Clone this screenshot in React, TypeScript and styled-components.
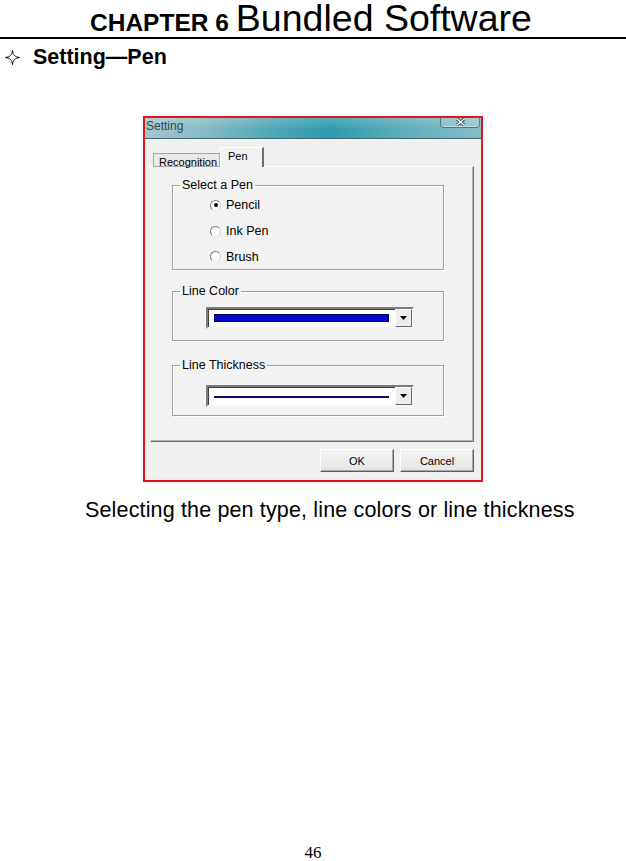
import { createGlobalStyle, styled } from "styled-components";

const GlobalStyle = createGlobalStyle`
  html, body {
    margin: 0;
    padding: 0;
    background: #fff;
  }
  body {
    font-family: "Liberation Sans", Arial, sans-serif;
    color: #000;
  }
  * {
    box-sizing: border-box;
  }
`;

const Page = styled.div`
  width: 626px;
  height: 861px;
  display: flex;
  flex-direction: column;
  overflow: hidden;
  background: #fff;
`;

const Header = styled.header`
  height: 39px;
  padding-left: 90px;
  border-bottom: 2px solid #000;
  line-height: 37px;
  white-space: nowrap;
  & .chapter {
    font-size: 24.5px;
    font-weight: bold;
    line-height: 1;
    margin-right: 7px;
  }
  & .title {
    font-size: 37.5px;
  }
`;

const SectionTitle = styled.h2`
  margin: 7px 0 0 5px;
  height: 22px;
  display: flex;
  align-items: center;
  gap: 13px;
  font-size: 21.5px;
  font-weight: bold;
  line-height: 22px;
`;

const Figure = styled.div`
  margin: 48px 0 0 143px;
`;

const Dialog = styled.div`
  width: 340px;
  height: 366px;
  border: 2px solid #e3151a;
  background: #f0f0f0;
  display: flex;
  flex-direction: column;
  font-family: "Liberation Sans", Arial, sans-serif;
`;

const TitleBar = styled.div`
  height: 21px;
  flex: none;
  display: flex;
  align-items: flex-start;
  padding-left: 1px;
  border-bottom: 1px solid #3f6a74;
  background:
    linear-gradient(to bottom, rgba(255, 255, 255, 0.18), rgba(255, 255, 255, 0) 60%),
    linear-gradient(
      to right,
      #a6c6cc 0%,
      #86bac4 18%,
      #4fa6b7 38%,
      #2c9aae 55%,
      #5aabba 75%,
      #86bcc6 100%
    );
`;

const TitleText = styled.span`
  font-size: 12px;
  line-height: 16px;
  color: #2b4a52;
`;

const CloseButton = styled.div`
  margin-left: auto;
  margin-right: 1px;
  width: 40px;
  height: 10px;
  border: 1px solid rgba(30, 60, 70, 0.55);
  border-top: none;
  border-radius: 0 0 4px 4px;
  box-shadow: inset 0 -1px 0 rgba(255, 255, 255, 0.45);
  background: rgba(255, 255, 255, 0.12);
  display: flex;
  align-items: flex-start;
  justify-content: center;
`;

const Body = styled.div`
  flex: 1;
  padding: 9px 7px 0 5px;
  display: flex;
  flex-direction: column;
`;

const TabRow = styled.div`
  height: 19px;
  padding-left: 3px;
  display: flex;
  align-items: flex-end;
  position: relative;
  z-index: 1;
  margin-bottom: -1px;
`;

const Tab = styled.div<{ $active?: boolean; $width: number }>`
  width: ${(p) => p.$width}px;
  height: ${(p) => (p.$active ? 20 : 14)}px;
  padding: 2px 0 0 ${(p) => (p.$active ? 7 : 5)}px;
  font-size: 11px;
  line-height: 13px;
  color: #000;
  background: ${(p) => (p.$active ? "#f2f2f2" : "#e9e9e9")};
  border: 1px solid #a5a5a5;
  border-bottom: ${(p) => (p.$active ? "none" : "1px solid #a5a5a5")};
  border-right-width: ${(p) => (p.$active ? 2 : 1)}px;
  border-right-color: ${(p) => (p.$active ? "#6e6e6e" : "#a5a5a5")};
  border-left-color: ${(p) => (p.$active ? "#fff" : "#a5a5a5")};
  border-top-color: ${(p) => (p.$active ? "#fff" : "#a5a5a5")};
`;

const Panel = styled.div`
  height: 276px;
  flex: none;
  background: #f2f2f2;
  border: 1px solid;
  border-color: #fff #6e6e6e #6e6e6e #fff;
  box-shadow: inset -1px -1px 0 #b4b4b4;
  padding: 11px 0 0 21px;
  display: flex;
  flex-direction: column;
`;

const Group = styled.fieldset<{ $gap: number }>`
  margin: ${(p) => p.$gap}px 0 0 0;
  padding: 0;
  width: 272px;
  min-width: 0;
  border: 1px solid #a0a0a0;
  box-shadow: inset 1px 1px 0 #fff, 1px 1px 0 #fff;
`;

const Legend = styled.legend`
  margin-left: 7px;
  padding: 0 2px;
  font-size: 12.5px;
  line-height: 14px;
  color: #000;
`;

const RadioList = styled.div`
  margin-top: 0;
  padding-left: 37px;
  display: flex;
  flex-direction: column;
`;

const RadioRow = styled.label`
  height: 26px;
  display: flex;
  align-items: center;
  gap: 5px;
  font-size: 12.5px;
  color: #000;
  &:last-child {
    height: 25px;
  }
`;

const RadioDot = styled.span<{ $checked?: boolean }>`
  width: 11px;
  height: 11px;
  border-radius: 50%;
  background: #fff;
  border: 1px solid;
  border-color: #7a7a7a #d0d0d0 #e4e4e4 #7a7a7a;
  display: flex;
  align-items: center;
  justify-content: center;
  &::after {
    content: "";
    width: 4px;
    height: 4px;
    border-radius: 50%;
    background: ${(p) => (p.$checked ? "#000" : "transparent")};
  }
`;

const Combo = styled.div<{ $top: number; $bottom: number }>`
  margin: ${(p) => p.$top}px 0 ${(p) => p.$bottom}px 33px;
  width: 208px;
  height: 22px;
  background: #fff;
  border: 2px solid;
  border-color: #7c7c7c #f4f4f4 #f4f4f4 #7c7c7c;
  box-shadow: inset 1px 1px 0 #404040;
  display: flex;
  align-items: center;
`;

const ColorBar = styled.div`
  flex: 1;
  height: 8px;
  margin: 0 6px 0 6px;
  background: #0006cc;
  border: 1px solid #00005a;
`;

const ThickLine = styled.div`
  flex: 1;
  height: 2px;
  margin: 1px 6px 0 6px;
  background: #0b0b70;
`;

const DropButton = styled.div`
  width: 17px;
  height: 100%;
  background: #ececec;
  border: 1px solid;
  border-color: #fff #6a6a6a #6a6a6a #fff;
  display: flex;
  align-items: center;
  justify-content: center;
`;

const ButtonRow = styled.div`
  margin-top: 7px;
  display: flex;
  justify-content: flex-end;
  gap: 6px;
`;

const Button = styled.div`
  width: 74px;
  height: 23px;
  display: flex;
  align-items: center;
  justify-content: center;
  font-size: 11px;
  color: #000;
  background: linear-gradient(to bottom, #f4f4f4, #e6e6e6);
  border: 1px solid;
  border-color: #fdfdfd #5e5e5e #5e5e5e #fdfdfd;
  box-shadow: inset -1px -1px 0 #a8a8a8;
`;

const Caption = styled.p`
  margin: 16px 0 0 85px;
  font-size: 21.5px;
  line-height: 24px;
  letter-spacing: 0.15px;
  white-space: nowrap;
`;

const Spacer = styled.div`
  flex: 1;
`;

const PageNumber = styled.div`
  height: 16px;
  margin-bottom: 0;
  line-height: 16px;
  text-align: center;
  font-family: "Liberation Serif", "Times New Roman", serif;
  font-size: 17px;
`;

function Sparkle() {
  return (
    <svg width="15" height="15" viewBox="0 0 15 15">
      <path
        d="M7.5 0.5 C8 5 10 7 14.5 7.5 C10 8 8 10 7.5 14.5 C7 10 5 8 0.5 7.5 C5 7 7 5 7.5 0.5 Z"
        fill="none"
        stroke="#000"
        strokeWidth="1"
      />
    </svg>
  );
}

function CloseGlyph() {
  return (
    <svg width="11" height="8" viewBox="0 0 11 8">
      <path d="M2 1 L9 7 M9 1 L2 7" stroke="#2c4e58" strokeWidth="3.2" />
      <path d="M2 1 L9 7 M9 1 L2 7" stroke="#fff" strokeWidth="1.6" />
    </svg>
  );
}

function Arrow() {
  return (
    <svg width="7" height="4" viewBox="0 0 7 4">
      <path d="M0 0 H7 L3.5 4 Z" fill="#000" />
    </svg>
  );
}

const pens = [
  { label: "Pencil", checked: true },
  { label: "Ink Pen", checked: false },
  { label: "Brush", checked: false },
];

export default function App() {
  return (
    <>
      <GlobalStyle />
      <Page>
        <Header>
          <span className="chapter">CHAPTER 6</span>
          <span className="title">Bundled Software</span>
        </Header>
        <SectionTitle>
          <Sparkle />
          Setting—Pen
        </SectionTitle>
        <Figure>
          <Dialog>
            <TitleBar>
              <TitleText>Setting</TitleText>
              <CloseButton>
                <CloseGlyph />
              </CloseButton>
            </TitleBar>
            <Body>
              <TabRow>
                <Tab $width={67}>Recognition</Tab>
                <Tab $width={44} $active>
                  Pen
                </Tab>
              </TabRow>
              <Panel>
                <Group $gap={0}>
                  <Legend>Select a Pen</Legend>
                  <RadioList>
                    {pens.map((pen) => (
                      <RadioRow key={pen.label}>
                        <RadioDot $checked={pen.checked} />
                        {pen.label}
                      </RadioRow>
                    ))}
                  </RadioList>
                </Group>
                <Group $gap={14}>
                  <Legend>Line Color</Legend>
                  <Combo $top={9} $bottom={11}>
                    <ColorBar />
                    <DropButton>
                      <Arrow />
                    </DropButton>
                  </Combo>
                </Group>
                <Group $gap={17}>
                  <Legend>Line Thickness</Legend>
                  <Combo $top={13} $bottom={8}>
                    <ThickLine />
                    <DropButton>
                      <Arrow />
                    </DropButton>
                  </Combo>
                </Group>
              </Panel>
              <ButtonRow>
                <Button>OK</Button>
                <Button>Cancel</Button>
              </ButtonRow>
            </Body>
          </Dialog>
        </Figure>
        <Caption>Selecting the pen type, line colors or line thickness</Caption>
        <Spacer />
        <PageNumber>46</PageNumber>
      </Page>
    </>
  );
}
